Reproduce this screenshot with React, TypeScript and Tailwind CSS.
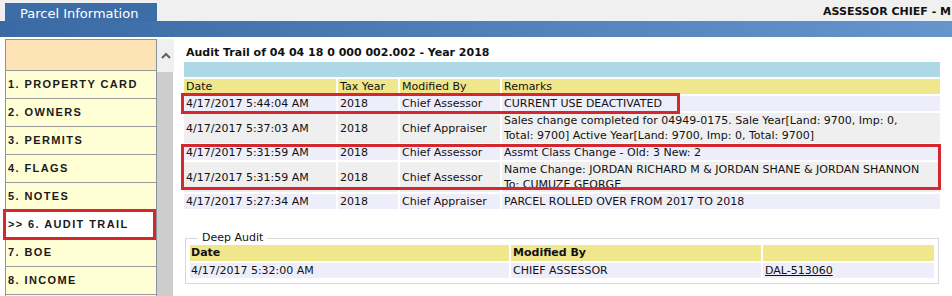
import React from "react";

const navItems = [
  "1. PROPERTY CARD",
  "2. OWNERS",
  "3. PERMITS",
  "4. FLAGS",
  "5. NOTES",
  ">> 6. AUDIT TRAIL",
  "7. BOE",
  "8. INCOME",
  "",
];

type AuditRow = {
  date: string;
  year: string;
  by: string;
  remarks: React.ReactNode;
  tall?: boolean;
};

const rows: AuditRow[] = [
  { date: "4/17/2017 5:44:04 AM", year: "2018", by: "Chief Assessor", remarks: "CURRENT USE DEACTIVATED" },
  {
    date: "4/17/2017 5:37:03 AM",
    year: "2018",
    by: "Chief Appraiser",
    remarks: (
      <>
        Sales change completed for 04949-0175. Sale Year[Land: 9700, Imp: 0,
        <br />
        Total: 9700] Active Year[Land: 9700, Imp: 0, Total: 9700]
      </>
    ),
    tall: true,
  },
  { date: "4/17/2017 5:31:59 AM", year: "2018", by: "Chief Assessor", remarks: "Assmt Class Change - Old: 3 New: 2" },
  {
    date: "4/17/2017 5:31:59 AM",
    year: "2018",
    by: "Chief Assessor",
    remarks: (
      <>
        Name Change: JORDAN RICHARD M &amp; JORDAN SHANE &amp; JORDAN SHANNON
        <br />
        To: CUMUZE GEORGE
      </>
    ),
    tall: true,
  },
  { date: "4/17/2017 5:27:34 AM", year: "2018", by: "Chief Appraiser", remarks: "PARCEL ROLLED OVER FROM 2017 TO 2018" },
];

export default function App() {
  return (
    <div className="relative w-[952px] h-[296px] overflow-hidden bg-white text-[11px] leading-[15px] text-[#111] font-['DejaVu_Sans',sans-serif]">
      {/** Top strip with tab */}
      <div className="h-[21px] bg-[#f0f0f0] flex items-end">
        <div className="ml-[5px] w-[152px] h-[18px] bg-[#3d6da6] text-white text-[13px] leading-[18px] pt-[2px] pl-[15px] whitespace-nowrap">
          Parcel Information
        </div>
        <div className="flex-1" />
        <div className="font-bold whitespace-nowrap pr-[1px] pb-[3px] leading-[13px]">ASSESSOR CHIEF - M</div>
      </div>
      <div className="h-[16px] bg-gradient-to-r from-[#3a6aa3] to-[#6496cc]" />

      <div className="flex pt-[2px]">
        {/** Left nav */}
        <div className="ml-[5px] w-[152px] flex-shrink-0 border-l border-r border-t border-[#8a949e] font-['Liberation_Sans',sans-serif] font-bold text-[11px] tracking-[1.4px] text-[#1a1a1a]">
          <div className="h-[31px] bg-[#fde3b6] border-b border-[#9a9a9a]" />
          {navItems.map((item, i) => (
            <div
              key={i}
              className={
                "h-[28px] border-b border-[#9a9a9a] pl-[2px] flex items-center whitespace-nowrap " +
                (i === 5 ? "bg-white" : "bg-[#fffed4]")
              }
            >
              {item}
            </div>
          ))}
        </div>

        {/** Scrollbar */}
        <div className="w-[17px] flex-shrink-0 flex flex-col h-[258px]">
          <div className="h-[33px] bg-[#f0f0f0] flex items-center justify-center">
            <svg width="10" height="7" viewBox="0 0 10 7" fill="none">
              <path d="M1 6l4-4 4 4" stroke="#606060" strokeWidth="2" />
            </svg>
          </div>
          <div className="flex-1 bg-[#cdcdcd] mr-[1px]" />
        </div>

        {/** Main */}
        <div className="pl-[10px] w-[766px]">
          <div className="h-[23px] pt-[7px] pl-[2px] font-bold whitespace-nowrap leading-[14px]">
            Audit Trail of 04 04 18 0 000 002.002 - Year 2018
          </div>
          <div className="w-[756px] h-[15px] bg-[#add8e6]" />

          <div className="mt-[2px] w-[756px] grid grid-cols-[152px_60px_100px_438px] gap-[2px]">
            {["Date", "Tax Year", "Modified By", "Remarks"].map((h) => (
              <div key={h} className="bg-[#f0e68c] h-[15px] pl-[2px] whitespace-nowrap">
                {h}
              </div>
            ))}
            {rows.map((r, i) => {
              const bg = i % 2 === 0 ? "bg-[#eeeefa]" : "bg-[#efefef]";
              const h = r.tall ? "h-[30px]" : "h-[15px]";
              const cell = `${bg} ${h} pl-[2px] whitespace-nowrap flex items-center`;
              return (
                <React.Fragment key={i}>
                  <div className={cell}>{r.date}</div>
                  <div className={cell}>{r.year}</div>
                  <div className={cell}>{r.by}</div>
                  <div className={`${bg} ${h} pl-[2px] whitespace-nowrap`}>{r.remarks}</div>
                </React.Fragment>
              );
            })}
          </div>

          {/** Deep audit */}
          <fieldset className="mt-[22px] ml-[1px] w-[754px] border border-[#d9d9d9] px-[4px] pb-[5px]">
            <legend className="ml-[8px] px-[4px] leading-[14px]">Deep Audit</legend>
            <div className="grid grid-cols-[319px_250px_171px] gap-x-[2px] gap-y-[2px]">
              <div className="bg-[#f0e68c] h-[16px] pl-[1px] font-bold">Date</div>
              <div className="bg-[#f0e68c] h-[16px] pl-[2px] font-bold">Modified By</div>
              <div className="bg-[#f0e68c] h-[16px]" />
              <div className="bg-[#eeeefa] h-[15px] pl-[1px]">4/17/2017 5:32:00 AM</div>
              <div className="bg-[#eeeefa] h-[15px] pl-[2px]">CHIEF ASSESSOR</div>
              <div className="bg-[#eeeefa] h-[15px] pl-[2px]">
                <a className="underline">DAL-513060</a>
              </div>
            </div>
          </fieldset>
        </div>
      </div>

      {/** Red highlight annotations */}
      <div className="absolute left-[181px] top-[93px] w-[499px] h-[21px] border-[3px] border-[#d5282e]" />
      <div className="absolute left-[181px] top-[144px] w-[760px] h-[46px] border-[3px] border-[#d5282e]" />
      <div className="absolute left-[3px] top-[209px] w-[153px] h-[31px] border-[3px] border-[#d5282e]" />
    </div>
  );
}
